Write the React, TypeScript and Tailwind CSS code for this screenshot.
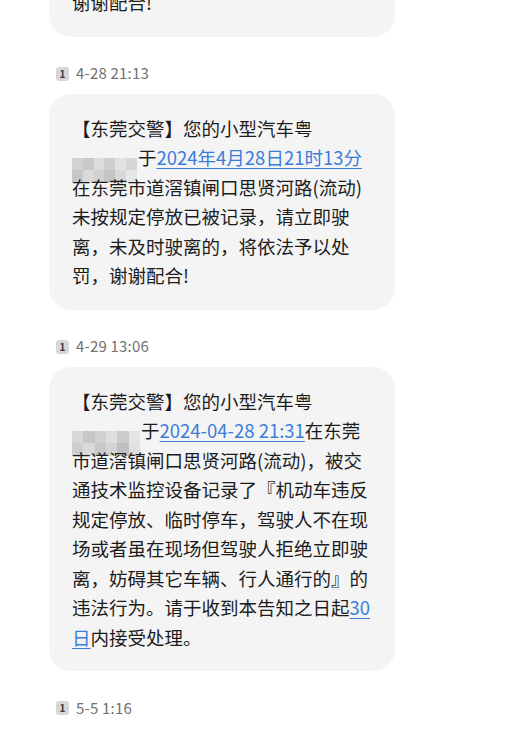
import React from "react";

const shadesA = ["#d2d2d2", "#c9c9c9", "#dcdcdc", "#cfcfcf", "#e2e2e2", "#d6d6d6", "#c6c6c6", "#dadada", "#d0d0d0", "#c4c4c4", "#d8d8d8", "#e6e6e6"];
const shadesB = ["#d8d8d8", "#c7c7c7", "#d1d1d1", "#dedede", "#cbcbcb", "#e4e4e4", "#cecece", "#d9d9d9", "#c8c8c8", "#d4d4d4", "#bfbfbf", "#e0e0e0"];

function Plate({ shades, wide }: { shades: string[]; wide?: boolean }) {
  return (
    <span
      className={`inline-grid grid-cols-6 grid-rows-2 align-[-5px] ${wide ? "w-[68px]" : "w-[65px]"} h-[25px] mr-[1px]`}
    >
      {shades.map((c, i) => (
        <span key={i} style={{ backgroundColor: c }} />
      ))}
    </span>
  );
}

function Link({ children }: { children: React.ReactNode }) {
  return (
    <span className="text-[#3b7ddb] underline decoration-[1px] underline-offset-[3px]">
      {children}
    </span>
  );
}

function Stamp({ time }: { time: string }) {
  return (
    <div className="mt-[27px] mb-[10px] h-[20px] flex items-center gap-[7px] pl-[56px]">
      <span className="w-[13px] h-[14px] rounded-[3px] bg-[#d7d7d7] text-[#3a3a3a] text-[10px] font-bold flex items-center justify-center leading-none">
        1
      </span>
      <span className="text-[15px] text-[#707070] tracking-[0.2px]">{time}</span>
    </div>
  );
}

function Bubble({ lines, className = "" }: { lines: React.ReactNode[]; className?: string }) {
  return (
    <div className={`ml-[49px] w-[346px] bg-[#f4f4f4] rounded-[22px] pl-[23px] pr-[20px] pt-[20px] pb-[19px] ${className}`}>
      {lines.map((l, i) => (
        <div key={i} className="whitespace-nowrap h-[29.5px] leading-[29.5px]">
          {l}
        </div>
      ))}
    </div>
  );
}

export default function App() {
  return (
    <div
      className="w-[509px] h-[729px] overflow-hidden bg-white text-[#1c1c1c] text-[18.5px]"
      style={{ fontFamily: '"Noto Sans CJK SC", "Noto Sans", sans-serif' }}
    >
      <Bubble className="mt-[-32px]" lines={["谢谢配合!"]} />

      <Stamp time="4-28 21:13" />
      <Bubble
        lines={[
          "【东莞交警】您的小型汽车粤",
          <>
            <Plate shades={shadesA} />于<Link>2024年4月28日21时13分</Link>
          </>,
          "在东莞市道滘镇闸口思贤河路(流动)",
          "未按规定停放已被记录，请立即驶",
          "离，未及时驶离的，将依法予以处",
          "罚，谢谢配合!",
        ]}
      />

      <Stamp time="4-29 13:06" />
      <Bubble
        lines={[
          "【东莞交警】您的小型汽车粤",
          <>
            <Plate shades={shadesB} wide />于<Link>2024-04-28 21:31</Link>在东莞
          </>,
          "市道滘镇闸口思贤河路(流动)，被交",
          "通技术监控设备记录了『机动车违反",
          "规定停放、临时停车，驾驶人不在现",
          "场或者虽在现场但驾驶人拒绝立即驶",
          "离，妨碍其它车辆、行人通行的』的",
          <>
            违法行为。请于收到本告知之日起<Link>30</Link>
          </>,
          <>
            <Link>日</Link>内接受处理。
          </>,
        ]}
      />

      <Stamp time="5-5 1:16" />
    </div>
  );
}
